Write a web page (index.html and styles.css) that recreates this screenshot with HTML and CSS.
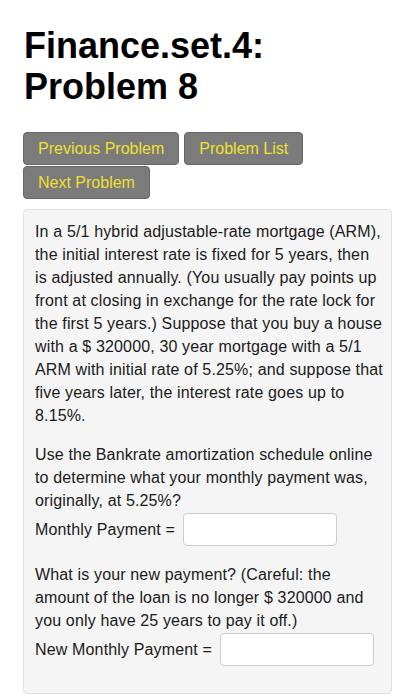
FILE: index.html
```html
<!DOCTYPE html>
<html>
<head>
<meta charset="utf-8">
<link rel="stylesheet" href="styles.css">
</head>
<body>
<h1 class="title">Finance.set.4: Problem 8</h1>
<div class="nav">
  <a class="btn">Previous Problem</a>
  <a class="btn">Problem List</a>
  <a class="btn">Next Problem</a>
</div>
<div class="problem">
  <p class="para">In a 5/1 hybrid adjustable-rate mortgage (ARM), the initial interest rate is fixed for 5 years, then is adjusted annually. (You usually pay points up front at closing in exchange for the rate lock for the first 5 years.) Suppose that you buy a house with a $ 320000, 30 year mortgage with a 5/1 ARM with initial rate of 5.25%; and suppose that five years later, the interest rate goes up to 8.15%.</p>
  <p class="para">Use the Bankrate amortization schedule online to determine what your monthly payment was, originally, at 5.25%?<br>Monthly Payment = <input class="answer" type="text"></p>
  <p class="para last">What is your new payment? (Careful: the amount of the loan is no longer $ 320000 and you only have 25 years to pay it off.)<br>New Monthly Payment = <input class="answer" type="text"></p>
</div>
</body>
</html>
```

FILE: styles.css
```css
html, body {
  margin: 0;
  padding: 0;
  background: #ffffff;
}
body {
  font-family: "Liberation Sans", Arial, Helvetica, sans-serif;
  color: #111;
  padding: 25px 19px 0 23px;
}
.title {
  margin: 0 0 24px 1px;
  font-size: 36px;
  line-height: 41.4px;
  font-weight: bold;
  color: #000;
  width: 300px;
}
.nav {
  display: flex;
  flex-wrap: wrap;
  column-gap: 5px;
  row-gap: 1px;
  margin-bottom: 10px;
}
.btn {
  display: block;
  box-sizing: border-box;
  height: 33px;
  line-height: 31px;
  padding: 0 14px;
  font-size: 16px;
  color: #f0e030;
  background: #7b7b7b;
  border: 1px solid #666;
  border-radius: 4px;
}
.problem {
  background: #f5f5f5;
  border: 1px solid #e3e3e3;
  border-radius: 4px;
  padding: 10px 6px 10px 11px;
  width: 350px;
}
.para {
  margin: 0 0 16px 0;
  font-size: 16px;
  line-height: 23px;
  letter-spacing: 0.15px;
  color: #1a1a1a;
}
.answer {
  box-sizing: border-box;
  width: 154px;
  height: 33px;
  margin: 1px 0 1px 3px;
  padding: 4px 6px;
  font: 16px/23px "Liberation Sans", Arial, sans-serif;
  background: #fff;
  border: 1px solid #cccccc;
  border-radius: 4px;
  vertical-align: baseline;
}
```
